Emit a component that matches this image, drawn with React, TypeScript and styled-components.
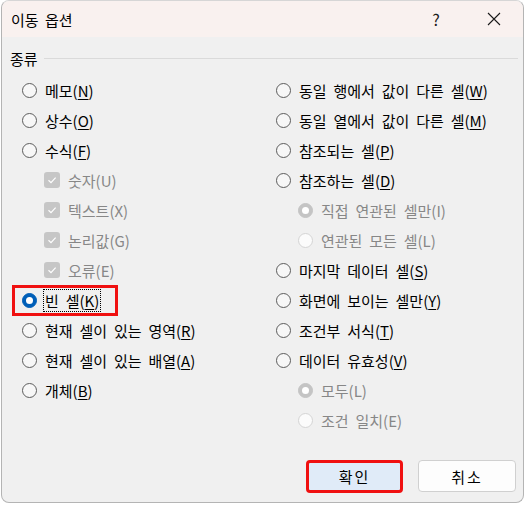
import React from "react";
import styled, { createGlobalStyle } from "styled-components";

const GlobalStyle = createGlobalStyle`
    body {
        margin: 0;
        background: #ffffff;
        font-family: "Noto Sans CJK KR", "Noto Sans", sans-serif;
    }
`;

const Dialog = styled.div`
    box-sizing: border-box;
    width: 523px;
    height: 503px;
    margin-left: 1px;
    border: 1px solid #b4b4b4;
    border-top-color: #d6d6d6;
    border-radius: 8px;
    overflow: hidden;
    display: flex;
    flex-direction: column;
    background: #f0f0f0;
`;

const TitleBar = styled.div`
    height: 36px;
    display: flex;
    align-items: center;
    background: #f9f1ef;
    padding-left: 9px;
`;

const TitleText = styled.div`
    flex: 1;
    font-size: 15px;
    word-spacing: 3px;
    color: #000;
`;

const TitleButton = styled.div`
    width: 58px;
    height: 36px;
    display: flex;
    align-items: center;
    justify-content: center;
    font-size: 16px;
    color: #1a1a1a;
`;

const Body = styled.div`
    flex: 1;
    display: flex;
    flex-direction: column;
    padding: 11px 5px 0 8px;
`;

const GroupHeader = styled.div`
    height: 20px;
    display: flex;
    align-items: center;
    gap: 6px;
    font-size: 15px;
    color: #000;
`;

const GroupLine = styled.div`
    flex: 1;
    height: 1px;
    background: #dadada;
`;

const Columns = styled.div`
    display: grid;
    grid-template-columns: 254px 1fr;
    margin-top: 7px;
    padding-left: 12px;
`;

const Column = styled.div`
    display: flex;
    flex-direction: column;
`;

const Row = styled.div<{ $indent?: boolean }>`
    height: 30px;
    display: flex;
    align-items: center;
    padding-left: ${(p) => (p.$indent ? "22px" : "0")};
`;

const Option = styled.span<{ $highlight?: boolean }>`
    display: inline-flex;
    align-items: center;
    gap: 6px;
    box-sizing: border-box;
    height: ${(p) => (p.$highlight ? "31px" : "auto")};
    margin-left: ${(p) => (p.$highlight ? "-10px" : "0")};
    padding: ${(p) => (p.$highlight ? "0 14px 0 7px" : "0")};
    border: ${(p) => (p.$highlight ? "3px solid #f01010" : "none")};
`;

const Radio = styled.span<{ $checked?: boolean; $disabled?: boolean }>`
    box-sizing: border-box;
    width: 15px;
    height: 15px;
    border-radius: 50%;
    flex-shrink: 0;
    display: flex;
    align-items: center;
    justify-content: center;
    border: 1px solid
        ${(p) =>
            p.$disabled
                ? p.$checked
                    ? "#c4c4c4"
                    : "#d4d4d4"
                : p.$checked
                ? "#005fb8"
                : "#5c5c5c"};
    background: ${(p) =>
        p.$disabled
            ? p.$checked
                ? "#c4c4c4"
                : "#fbfbfb"
            : p.$checked
            ? "#005fb8"
            : "#f7f7f7"};

    &::after {
        content: "";
        display: ${(p) => (p.$checked ? "block" : "none")};
        width: 7px;
        height: 7px;
        border-radius: 50%;
        background: #ffffff;
    }
`;

const CheckBox = styled.span`
    box-sizing: border-box;
    width: 16px;
    height: 16px;
    border-radius: 3px;
    background: #c6c6c6;
    flex-shrink: 0;
    display: flex;
    align-items: center;
    justify-content: center;
`;

const Label = styled.span<{ $disabled?: boolean; $focused?: boolean }>`
    font-size: 15px;
    line-height: 21px;
    white-space: nowrap;
    word-spacing: 3.5px;
    color: ${(p) => (p.$disabled ? "#878787" : "#000000")};
    padding: 0 1px;
    border: 1px ${(p) => (p.$focused ? "dotted #000" : "solid transparent")};

    u {
        text-underline-offset: 2px;
    }
`;

const Footer = styled.div`
    margin-top: auto;
    display: flex;
    justify-content: flex-end;
    gap: 15px;
    padding: 0 2px 9px 0;
`;

const Button = styled.button<{ $primary?: boolean }>`
    box-sizing: border-box;
    width: ${(p) => (p.$primary ? "97px" : "98px")};
    height: ${(p) => (p.$primary ? "33px" : "32px")};
    border-radius: 4px;
    border: ${(p) => (p.$primary ? "3px solid #f01010" : "1px solid #d0d0d0")};
    background: ${(p) => (p.$primary ? "#e0ebf8" : "#fdfdfd")};
    font-family: inherit;
    font-size: 15px;
    letter-spacing: 2px;
    color: #000;
    padding: 0;
`;

type Item = {
    text: string;
    key?: string;
    kind?: "radio" | "check";
    indent?: boolean;
    checked?: boolean;
    disabled?: boolean;
    highlight?: boolean;
};

const leftItems: Item[] = [
    { text: "메모", key: "N" },
    { text: "상수", key: "O" },
    { text: "수식", key: "F" },
    { text: "숫자", key: "U", kind: "check", indent: true, checked: true, disabled: true },
    { text: "텍스트", key: "X", kind: "check", indent: true, checked: true, disabled: true },
    { text: "논리값", key: "G", kind: "check", indent: true, checked: true, disabled: true },
    { text: "오류", key: "E", kind: "check", indent: true, checked: true, disabled: true },
    { text: "빈 셀", key: "K", checked: true, highlight: true },
    { text: "현재 셀이 있는 영역", key: "R" },
    { text: "현재 셀이 있는 배열", key: "A" },
    { text: "개체", key: "B" },
];

const rightItems: Item[] = [
    { text: "동일 행에서 값이 다른 셀", key: "W" },
    { text: "동일 열에서 값이 다른 셀", key: "M" },
    { text: "참조되는 셀", key: "P" },
    { text: "참조하는 셀", key: "D" },
    { text: "직접 연관된 셀만", key: "I", indent: true, checked: true, disabled: true },
    { text: "연관된 모든 셀", key: "L", indent: true, disabled: true },
    { text: "마지막 데이터 셀", key: "S" },
    { text: "화면에 보이는 셀만", key: "Y" },
    { text: "조건부 서식", key: "T" },
    { text: "데이터 유효성", key: "V" },
    { text: "모두", key: "L", indent: true, checked: true, disabled: true },
    { text: "조건 일치", key: "E", indent: true, disabled: true },
];

function CheckMark() {
    return (
        <svg width="10" height="10" viewBox="0 0 10 10">
            <path d="M1.5 5.2 L4 7.6 L8.6 2.6" fill="none" stroke="#fff" strokeWidth="1.2" />
        </svg>
    );
}

function OptionRow({ item }: { item: Item }) {
    return (
        <Row $indent={item.indent}>
            <Option $highlight={item.highlight}>
                {item.kind === "check" ? (
                    <CheckBox>
                        <CheckMark />
                    </CheckBox>
                ) : (
                    <Radio $checked={item.checked} $disabled={item.disabled} />
                )}
                <Label $disabled={item.disabled} $focused={item.highlight}>
                    {item.text}(
                    {item.disabled ? item.key : <u>{item.key}</u>})
                </Label>
            </Option>
        </Row>
    );
}

export default function App() {
    return (
        <>
            <GlobalStyle />
            <Dialog>
                <TitleBar>
                    <TitleText>이동 옵션</TitleText>
                    <TitleButton>?</TitleButton>
                    <TitleButton>
                        <svg width="14" height="14" viewBox="0 0 14 14">
                            <path d="M1 1 L13 13 M13 1 L1 13" stroke="#1a1a1a" strokeWidth="1.1" />
                        </svg>
                    </TitleButton>
                </TitleBar>
                <Body>
                    <GroupHeader>
                        종류
                        <GroupLine />
                    </GroupHeader>
                    <Columns>
                        <Column>
                            {leftItems.map((item) => (
                                <OptionRow key={item.text} item={item} />
                            ))}
                        </Column>
                        <Column>
                            {rightItems.map((item) => (
                                <OptionRow key={item.text} item={item} />
                            ))}
                        </Column>
                    </Columns>
                    <Footer>
                        <Button $primary>확인</Button>
                        <Button>취소</Button>
                    </Footer>
                </Body>
            </Dialog>
        </>
    );
}
